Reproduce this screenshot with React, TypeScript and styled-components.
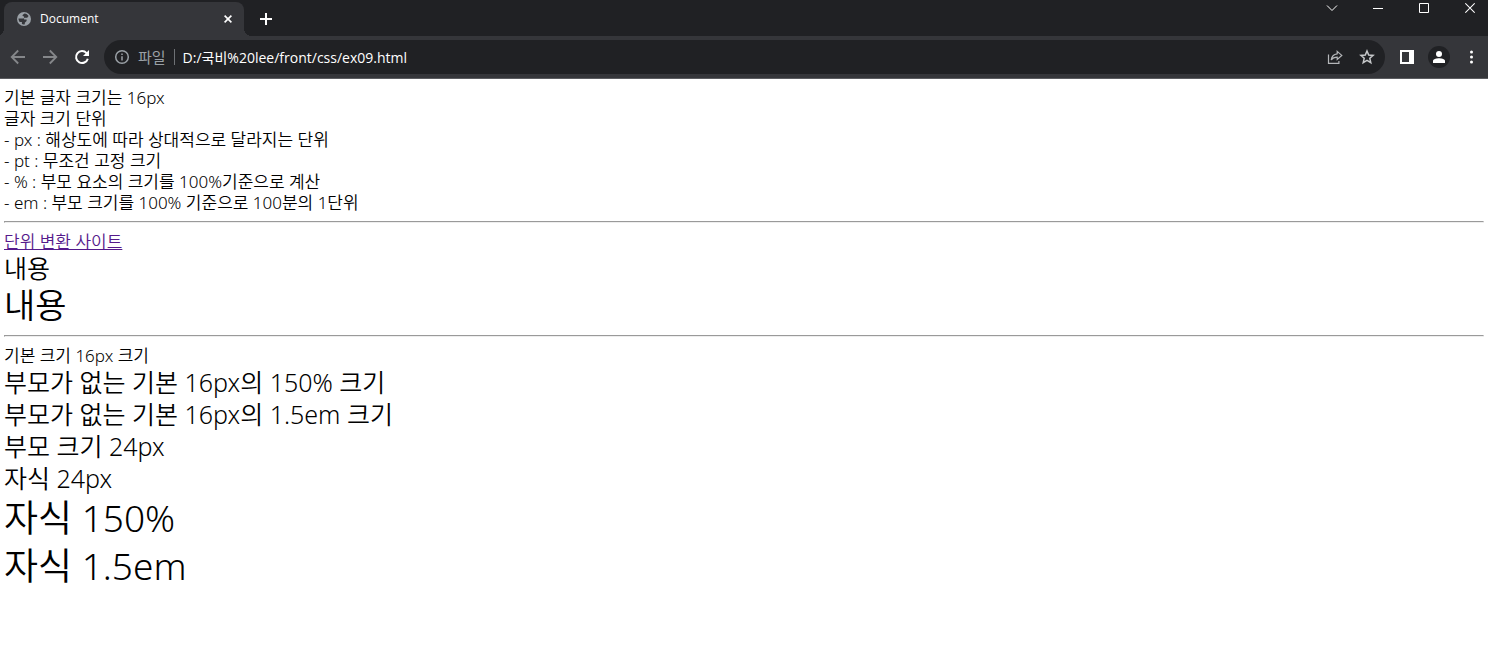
import React from "react";
import styled, { createGlobalStyle, css } from "styled-components";

const GlobalStyle = createGlobalStyle`
  body {
    margin: 0;
    background: #fff;
    color: #000;
    font-family: "Open Sans", "Noto Sans CJK KR", sans-serif;
  }
  *, *::before, *::after { box-sizing: border-box; }
`;

const TabStrip = styled.header`
  display: flex;
  justify-content: space-between;
  height: 36px;
  padding-left: 4px;
  overflow: hidden;
  background: #202124;
`;

const Tabs = styled.div`
  display: flex;
  align-items: flex-end;
`;

const Tab = styled.div`
  position: relative;
  display: flex;
  align-items: center;
  width: 240px;
  height: 34px;
  padding: 0 8px 0 12px;
  border-radius: 8px 8px 0 0;
  background: #35363a;
  color: #fff;

  &::before,
  &::after {
    content: "";
    position: absolute;
    bottom: 0;
    width: 8px;
    height: 8px;
  }
  &::before {
    right: 100%;
    background: radial-gradient(circle at 0 0, transparent 8px, #35363a 8px);
  }
  &::after {
    left: 100%;
    background: radial-gradient(circle at 100% 0, transparent 8px, #35363a 8px);
  }
`;

const TabTitle = styled.span`
  flex: 1;
  margin-left: 8px;
  font-size: 12px;
  line-height: 16px;
`;

const IconButton = styled.button<{ $width: number; $tone?: string }>`
  display: flex;
  align-items: center;
  justify-content: center;
  flex: none;
  width: ${(p) => p.$width}px;
  height: 34px;
  padding: 0;
  border: 0;
  background: none;
  color: ${(p) => p.$tone ?? "#fff"};

  svg { display: block; }
`;

const WindowControls = styled.div`
  display: flex;
  align-items: flex-start;
  margin-right: -5px;

  button { height: 16px; }
`;

const Toolbar = styled.nav`
  display: flex;
  align-items: center;
  height: 43px;
  padding-left: 2px;
  border-bottom: 1px solid #5b5c60;
  background: #35363a;
`;

const AddressBar = styled.div`
  display: flex;
  align-items: center;
  flex: 1;
  height: 34px;
  margin: 0 6px;
  padding: 0 2px 0 10px;
  border-radius: 17px;
  background: #202124;
`;

const Scheme = styled.label`
  margin: 0 8px;
  padding-right: 8px;
  border-right: 1px solid #6e7175;
  color: #9aa0a6;
  font-size: 15px;
  line-height: 16px;
  white-space: nowrap;
`;

const Address = styled.input`
  flex: 1;
  min-width: 0;
  height: 24px;
  padding: 0;
  border: 0;
  outline: 0;
  background: none;
  color: #fff;
  font-family: "Open Sans", "Noto Sans CJK KR", sans-serif;
  font-size: 14px;
`;

const Avatar = styled.span`
  display: flex;
  align-items: center;
  justify-content: center;
  width: 22px;
  height: 22px;
  border-radius: 50%;
  background: #202124;
`;

const Page = styled.main`
  padding: 8px 4px;
  font-family: "Noto Sans", "Noto Sans CJK KR", sans-serif;
  font-weight: 350;
`;

const sizes = {
  base: css`font-size: 17px; line-height: 21px;`,
  medium: css`font-size: 25px; line-height: 32px;`,
  large: css`font-size: 34px; line-height: 43px;`,
  huge: css`font-size: 37px; line-height: 48px;`,
};

const Line = styled.div<{ $size?: keyof typeof sizes }>`
  ${(p) => sizes[p.$size ?? "base"]}
`;

const Link = styled.a`
  color: #551a8b;
`;

const Rule = styled.hr`
  margin: 8px 0;
  border: 1px inset #eee;
`;

const stroke = { fill: "none", stroke: "currentColor" } as const;

const Globe = () => (
  <svg width="16" height="16" viewBox="0 0 16 16" aria-hidden="true">
    <circle cx="8" cy="8" r="7" fill="#9aa0a6" />
    <path d="M8.6 2.4c-1 .7-2.1 1-2.1 2.2 0 1 1.8.6 1.8 1.7 0 1-1.2 1.2-2.2 1.2H2.5c0 1.1.5 2.6 1.2 3.4h2.2v2.2c.8.5 2.1.5 2.9.2v-1.500l1.800-1.700V8.600H8.300l-.7-1 1.400-.8h2.200l1.400-1.700C11.800 3.600 10.200 2.500 8.600 2.400z" fill="#35363a" />
  </svg>
);

const lines = [
  "기본 글자 크기는 16px",
  "글자 크기 단위",
  "- px : 해상도에 따라 상대적으로 달라지는 단위",
  "- pt : 무조건 고정 크기",
  "- % : 부모 요소의 크기를 100%기준으로 계산",
  "- em : 부모 크기를 100% 기준으로 100분의 1단위",
];

export default function App() {
  return (
    <>
      <GlobalStyle />
      <TabStrip>
        <Tabs>
          <Tab>
            <Globe />
            <TabTitle>Document</TabTitle>
            <IconButton $width={16} aria-label="탭 닫기">
              <svg width="8" height="8" viewBox="0 0 8 8" {...stroke} strokeWidth="1.6">
                <path d="M.6.6l6.800 6.800M7.400.6L.6 7.400" />
              </svg>
            </IconButton>
          </Tab>
          <IconButton $width={44} aria-label="새 탭">
            <svg width="12" height="12" viewBox="0 0 12 12" {...stroke} strokeWidth="2">
              <path d="M6 0v12M0 6h12" />
            </svg>
          </IconButton>
        </Tabs>
        <WindowControls>
          <IconButton $width={46} aria-label="탭 검색">
            <svg width="12" height="16" viewBox="0 0 12 16" {...stroke}>
              <path d="M1 5.500l5 5 5-5" />
            </svg>
          </IconButton>
          <IconButton $width={46} aria-label="최소화">
            <svg width="10" height="16" viewBox="0 0 10 16" {...stroke}>
              <path d="M0 8.500h10" />
            </svg>
          </IconButton>
          <IconButton $width={46} aria-label="최대화">
            <svg width="10" height="16" viewBox="0 0 10 16" {...stroke}>
              <path d="M.5 3.500h9v9h-9z" />
            </svg>
          </IconButton>
          <IconButton $width={46} aria-label="닫기">
            <svg width="10" height="16" viewBox="0 0 10 16" {...stroke} strokeWidth="1.2">
              <path d="M.3 3.300l9.400 9.400M9.700 3.300L.3 12.700" />
            </svg>
          </IconButton>
        </WindowControls>
      </TabStrip>

      <Toolbar>
        <IconButton $width={32} $tone="#85878a" aria-label="뒤로">
          <svg width="16" height="16" viewBox="0 0 16 16" {...stroke} strokeWidth="1.800">
            <path d="M15 8H2M8.200 1.500L1.700 8l6.500 6.500" />
          </svg>
        </IconButton>
        <IconButton $width={32} $tone="#85878a" aria-label="앞으로">
          <svg width="16" height="16" viewBox="0 0 16 16" {...stroke} strokeWidth="1.800">
            <path d="M1 8h13M7.800 1.500L14.300 8l-6.500 6.500" />
          </svg>
        </IconButton>
        <IconButton $width={32} aria-label="새로고침">
          <svg width="16" height="16" viewBox="0 0 16 16" {...stroke} strokeWidth="2">
            <path d="M13.800 9.700A6 6 0 1 1 12.600 4.100" />
            <path d="M15 1v6H9z" fill="currentColor" stroke="none" />
          </svg>
        </IconButton>
        <AddressBar>
          <IconButton $width={16} $tone="#9aa0a6" aria-label="사이트 정보">
            <svg width="16" height="16" viewBox="0 0 16 16" {...stroke} strokeWidth="1.500">
              <circle cx="8" cy="8" r="6.300" />
              <path d="M8 7.200v4.300M8 4.500v1.600" />
            </svg>
          </IconButton>
          <Scheme htmlFor="address">파일</Scheme>
          <Address id="address" defaultValue="D:/국비%20lee/front/css/ex09.html" />
          <IconButton $width={32} $tone="#b4b6b9" aria-label="공유">
            <svg width="16" height="16" viewBox="0 0 16 16" {...stroke} strokeWidth="1.200">
              <path d="M1.500 5.500v8.900h10.400v-2.400" />
              <path d="M10.200 2.400l4.600 4-4.600 4V8.200C7.500 8.200 5.500 9 4.200 11c.4-3.300 2.600-5.700 6-6.200z" />
            </svg>
          </IconButton>
          <IconButton $width={32} $tone="#c6c8ca" aria-label="북마크에 추가">
            <svg width="16" height="16" viewBox="0 0 16 16" {...stroke} strokeWidth="1.500">
              <path d="M8 2l1.700 4 4.400.4-3.300 2.900 1 4.300L8 11.300l-3.800 2.300 1-4.300L1.900 6.400 6.300 6z" />
            </svg>
          </IconButton>
        </AddressBar>
        <IconButton $width={32} aria-label="측면 패널">
          <svg width="14" height="14" viewBox="0 0 14 14" fill="currentColor">
            <path fillRule="evenodd" d="M0 0h14v14H0zM2 2v10h7V2z" />
          </svg>
        </IconButton>
        <IconButton $width={32} aria-label="프로필">
          <Avatar>
            <svg width="12" height="12" viewBox="0 0 12 12" fill="currentColor">
              <circle cx="6" cy="3" r="3" />
              <path d="M0 12V10C0 8 3.500 7.200 6 7.200S12 8 12 10v2z" />
            </svg>
          </Avatar>
        </IconButton>
        <IconButton $width={33} aria-label="메뉴">
          <svg width="3" height="14" viewBox="0 0 3 14" fill="currentColor">
            <circle cx="1.500" cy="2" r="1.500" />
            <circle cx="1.500" cy="7" r="1.500" />
            <circle cx="1.500" cy="12" r="1.500" />
          </svg>
        </IconButton>
      </Toolbar>

      <Page>
        {lines.map((text) => (
          <Line key={text}>{text}</Line>
        ))}
        <Rule />
        <Line>
          <Link href="#">단위 변환 사이트</Link>
        </Line>
        <Line $size="medium">내용</Line>
        <Line $size="large">내용</Line>
        <Rule />
        <Line>기본 크기 16px 크기</Line>
        <Line $size="medium">부모가 없는 기본 16px의 150% 크기</Line>
        <Line $size="medium">부모가 없는 기본 16px의 1.5em 크기</Line>
        <Line $size="medium">부모 크기 24px</Line>
        <Line $size="medium">자식 24px</Line>
        <Line $size="huge">자식 150%</Line>
        <Line $size="huge">자식 1.5em</Line>
      </Page>
    </>
  );
}
